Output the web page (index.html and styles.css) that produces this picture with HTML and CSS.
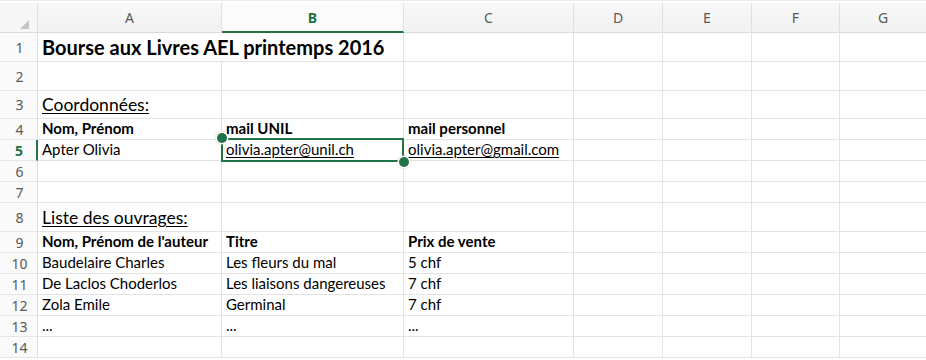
FILE: index.html
```html
<!DOCTYPE html>
<html lang="fr">
<head>
<meta charset="utf-8">
<title>Bourse aux Livres AEL printemps 2016</title>
<link rel="stylesheet" href="styles.css">
</head>
<body>
<div class="sheet">
  <!-- column headers -->
  <div class="corner"><span class="tri"></span></div>
  <div class="colh">A</div>
  <div class="colh sel">B</div>
  <div class="colh">C</div>
  <div class="colh">D</div>
  <div class="colh">E</div>
  <div class="colh">F</div>
  <div class="colh last">G</div>

  <!-- row 1 -->
  <div class="rowh">1</div>
  <div class="c span2 title">Bourse aux Livres AEL printemps 2016</div>
  <div class="c"></div><div class="c"></div><div class="c"></div><div class="c"></div><div class="c last"></div>

  <!-- row 2 -->
  <div class="rowh">2</div>
  <div class="c"></div><div class="c"></div><div class="c"></div><div class="c"></div><div class="c"></div><div class="c"></div><div class="c last"></div>

  <!-- row 3 -->
  <div class="rowh">3</div>
  <div class="c big"><span class="u">Coordonnées:</span></div>
  <div class="c"></div><div class="c"></div><div class="c"></div><div class="c"></div><div class="c"></div><div class="c last"></div>

  <!-- row 4 -->
  <div class="rowh">4</div>
  <div class="c b">Nom, Prénom</div>
  <div class="c b">mail UNIL</div>
  <div class="c b">mail personnel</div>
  <div class="c"></div><div class="c"></div><div class="c"></div><div class="c last"></div>

  <!-- row 5 -->
  <div class="rowh sel">5</div>
  <div class="c">Apter Olivia</div>
  <div class="c active"><span class="u">olivia.apter@unil.ch</span><span class="sel-box"></span><span class="handle tl"></span><span class="handle br"></span></div>
  <div class="c"><span class="u">olivia.apter@gmail.com</span></div>
  <div class="c"></div><div class="c"></div><div class="c"></div><div class="c last"></div>

  <!-- row 6 -->
  <div class="rowh">6</div>
  <div class="c"></div><div class="c"></div><div class="c"></div><div class="c"></div><div class="c"></div><div class="c"></div><div class="c last"></div>

  <!-- row 7 -->
  <div class="rowh">7</div>
  <div class="c"></div><div class="c"></div><div class="c"></div><div class="c"></div><div class="c"></div><div class="c"></div><div class="c last"></div>

  <!-- row 8 -->
  <div class="rowh">8</div>
  <div class="c big"><span class="u">Liste des ouvrages:</span></div>
  <div class="c"></div><div class="c"></div><div class="c"></div><div class="c"></div><div class="c"></div><div class="c last"></div>

  <!-- row 9 -->
  <div class="rowh">9</div>
  <div class="c b">Nom, Prénom de l'auteur</div>
  <div class="c b">Titre</div>
  <div class="c b">Prix de vente</div>
  <div class="c"></div><div class="c"></div><div class="c"></div><div class="c last"></div>

  <!-- row 10 -->
  <div class="rowh">10</div>
  <div class="c">Baudelaire Charles</div>
  <div class="c">Les fleurs du mal</div>
  <div class="c">5 chf</div>
  <div class="c"></div><div class="c"></div><div class="c"></div><div class="c last"></div>

  <!-- row 11 -->
  <div class="rowh">11</div>
  <div class="c">De Laclos Choderlos</div>
  <div class="c">Les liaisons dangereuses</div>
  <div class="c">7 chf</div>
  <div class="c"></div><div class="c"></div><div class="c"></div><div class="c last"></div>

  <!-- row 12 -->
  <div class="rowh">12</div>
  <div class="c">Zola Emile</div>
  <div class="c">Germinal</div>
  <div class="c">7 chf</div>
  <div class="c"></div><div class="c"></div><div class="c"></div><div class="c last"></div>

  <!-- row 13 -->
  <div class="rowh">13</div>
  <div class="c">...</div>
  <div class="c">...</div>
  <div class="c">...</div>
  <div class="c"></div><div class="c"></div><div class="c"></div><div class="c last"></div>

  <!-- row 14 -->
  <div class="rowh">14</div>
  <div class="c"></div><div class="c"></div><div class="c"></div><div class="c"></div><div class="c"></div><div class="c"></div><div class="c last"></div>
</div>
</body>
</html>
```

FILE: styles.css
```css
* { box-sizing: border-box; }

html, body {
  margin: 0;
  padding: 0;
  background: #ffffff;
}

body {
  width: 926px;
  height: 360px;
  overflow: hidden;
  padding-top: 2px;
  border-top: 1px solid #ececec;
}

.sheet {
  display: grid;
  grid-template-columns: 38px 184px 182px 170px 89px 89px 88px 86px;
  grid-template-rows: 30px 29px 29px 28px 21px 21px 21px 21px 29px 21px 21px 21px 21px 21px 21px;
  font-family: Lato, "Liberation Sans", sans-serif;
  color: #000;
}

.corner {
  position: relative;
  background: #f6f6f6;
  border-right: 1px solid #dedede;
  border-bottom: 1px solid #dedede;
}

.tri {
  position: absolute;
  left: 20px;
  top: 17px;
  width: 0;
  height: 0;
  border-left: 9px solid transparent;
  border-bottom: 9px solid #c4c4c4;
}

.colh {
  display: flex;
  align-items: center;
  justify-content: center;
  background: linear-gradient(#f8f8f8, #f1f1f1);
  border-right: 1px solid #e0e0e0;
  border-bottom: 1px solid #d9d9d9;
  font-family: "Noto Sans", "Open Sans", sans-serif;
  font-size: 14px;
  color: #595959;
}

.colh.sel {
  background: #fbfbfb;
  color: #217346;
  font-weight: 700;
  border-bottom: 2px solid #217346;
}

.colh.last, .c.last { border-right: none; }

.rowh {
  display: flex;
  align-items: center;
  justify-content: center;
  background: #fafafa;
  border-right: 1px solid #dedede;
  border-bottom: 1px solid #e6e6e6;
  font-family: "Noto Sans", "Open Sans", sans-serif;
  font-size: 14px;
  color: #595959;
  padding-left: 2px;
}

.rowh.sel {
  color: #217346;
  font-weight: 700;
  border-right: 2px solid #217346;
}

.c {
  display: flex;
  align-items: flex-end;
  padding: 0 3px 2px 4px;
  border-right: 1px solid #e3e3e3;
  border-bottom: 1px solid #e3e3e3;
  font-size: 15px;
  line-height: 18px;
  white-space: nowrap;
  min-width: 0;
}

.span2 { grid-column: span 2; }

.title {
  font-size: 20px;
  font-weight: 700;
  line-height: 24px;
  padding-bottom: 2px;
}

.big {
  font-size: 17.5px;
  line-height: 22px;
  padding-bottom: 2px;
}

.b { font-weight: 700; }

.u {
  text-decoration: underline;
  text-underline-offset: 2px;
}

.active { position: relative; overflow: visible; }

.sel-box {
  position: absolute;
  left: -1px;
  top: -2px;
  right: -1px;
  bottom: -2px;
  border: 2px solid #217346;
  pointer-events: none;
}

.handle {
  position: absolute;
  width: 10px;
  height: 10px;
  border-radius: 50%;
  background: #217346;
  box-shadow: 0 0 0 1.5px #fff, 0 0 2px 2px rgba(0,0,0,0.12);
}

.handle.tl {
  left: -5px;
  top: -7px;
}

.handle.br {
  right: -6px;
  bottom: -7px;
}
```
